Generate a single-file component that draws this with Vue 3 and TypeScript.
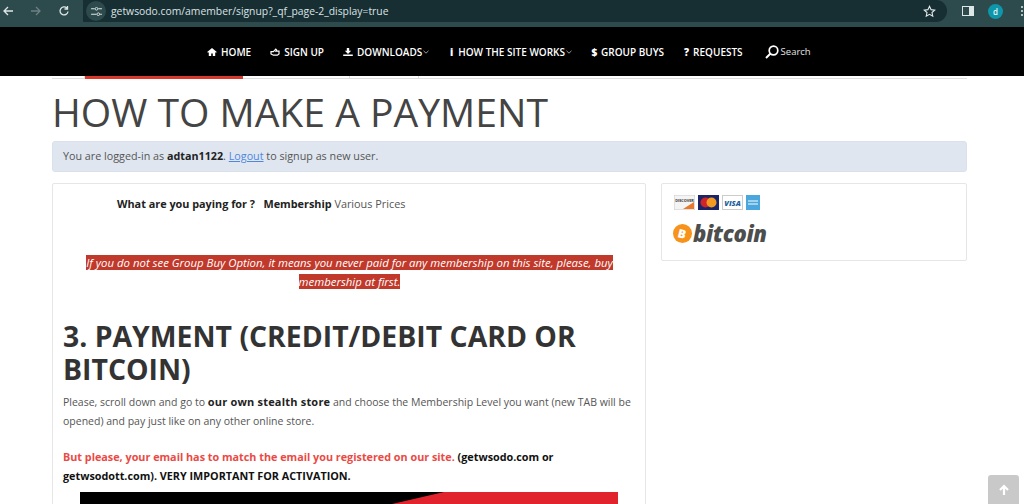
<script setup lang="ts">
const navItems = [
  { icon: "home", label: "HOME", caret: false },
  { icon: "hand", label: "SIGN UP", caret: false },
  { icon: "download", label: "DOWNLOADS", caret: true },
  { icon: "i", label: "HOW THE SITE WORKS", caret: true },
  { icon: "$", label: "GROUP BUYS", caret: false },
  { icon: "?", label: "REQUESTS", caret: false },
];

const tabWidths = [33, 158, 107, 69];
</script>

<template>
  <div class="page">
    <div class="chrome">
      <svg class="cicon" viewBox="0 0 12 12"><path d="M11 6H2M6 2 2 6l4 4" fill="none" stroke="#dfe6e6" stroke-width="1.3" /></svg>
      <svg class="cicon fwd" viewBox="0 0 12 12"><path d="M1 6h9M6 2l4 4-4 4" fill="none" stroke="#6d8082" stroke-width="1.3" /></svg>
      <svg class="cicon reload" viewBox="0 0 12 12"><path d="M10 6.5A4 4 0 1 1 8.8 3M9.5 1v3h-3" fill="none" stroke="#dfe6e6" stroke-width="1.3" /></svg>
      <div class="url">
        <span class="tune">
          <svg viewBox="0 0 12 10" width="11" height="9"><path d="M0 2h4M8 2h4M0 8h6M10 8h2" stroke="#dfe6e6" stroke-width="1.2" /><circle cx="6" cy="2" r="1.5" fill="none" stroke="#dfe6e6" /><circle cx="8" cy="8" r="1.5" fill="none" stroke="#dfe6e6" /></svg>
        </span>
        <span class="addr">getwsodo.com/amember/signup?_qf_page-2_display=true</span>
        <svg class="star" viewBox="0 0 14 14"><path d="M7 1.4 8.7 5l3.9.5-2.9 2.6.8 3.9L7 10.1 3.5 12l.8-3.9L1.4 5.5 5.3 5z" fill="none" stroke="#e3e9e9" stroke-width="1.2" /></svg>
      </div>
      <span class="panel"></span>
      <span class="avatar">d</span>
      <span class="dots"><i></i><i></i><i></i></span>
    </div>

    <nav class="nav">
      <a v-for="item in navItems" :key="item.label" class="nav-item">
        <svg v-if="item.icon === 'home'" class="nav-svg" viewBox="0 0 12 10"><path d="M6 0 0 5l1 1 1-.8V10h3V7h2v3h3V5.200l1 .8 1-1z" fill="#fff" /></svg>
        <svg v-else-if="item.icon === 'hand'" class="nav-svg" viewBox="0 0 12 10"><path d="M1 4.500h3L7 1.500l1 1-1 1.500h4v3.500L9 9H4L1 7.500z" fill="none" stroke="#fff" stroke-width="1.500" /></svg>
        <svg v-else-if="item.icon === 'download'" class="nav-svg" viewBox="0 0 12 10"><path d="M4.500 0h3v3.500H10L6 7.500 2 3.500h2.500zM0 8h12v2H0z" fill="#fff" /></svg>
        <span v-else class="nav-glyph">{{ item.icon }}</span>
        <span>{{ item.label }}</span>
        <svg v-if="item.caret" class="caret" viewBox="0 0 6 4"><path d="M.5.800 3 3.200 5.500.800" fill="none" stroke="#ddd" stroke-width=".7" /></svg>
      </a>
      <a class="search">
        <svg viewBox="0 0 14 14" width="14" height="14"><circle cx="8.500" cy="5.500" r="4.300" fill="none" stroke="#fff" stroke-width="1.700" /><path d="M5.500 8.500 1 13" stroke="#fff" stroke-width="1.900" /></svg>
        <span>Search</span>
      </a>
    </nav>

    <main class="main">
      <div class="tabs">
        <span
          v-for="(w, i) in tabWidths"
          :key="i"
          class="tab"
          :class="{ active: i === 1 }"
          :style="{ width: `${w}px` }"
        ></span>
      </div>
      <h1 class="title">HOW TO MAKE A PAYMENT</h1>
      <div class="alert">
        You are logged-in as <strong>adtan1122</strong>. <a class="link">Logout</a> to signup as new user.
      </div>

      <div class="columns">
        <section class="card content">
          <p class="paying"><strong>What are you paying for ? &nbsp;&nbsp;Membership</strong> Various Prices</p>
          <p class="notice"><span>If you do not see Group Buy Option, it means you never paid for any membership on this site, please, buy membership at first.</span></p>
          <h2 class="heading">3. PAYMENT (CREDIT/DEBIT CARD OR BITCOIN)</h2>
          <p class="body intro">Please, scroll down and go to <strong>our own stealth store</strong> and choose the Membership Level you want (new TAB will be opened) and pay just like on any other online store.</p>
          <p class="body warn">
            <strong class="red">But please, your email has to match the email you registered on our site.</strong>
            <strong class="black"> (getwsodo.com or getwsodott.com). VERY IMPORTANT FOR ACTIVATION.</strong>
          </p>
          <div class="banner">
            <svg viewBox="0 0 538 12" preserveAspectRatio="none" width="538" height="12"><path d="M0 0h364L312 12H0z" fill="#000" /></svg>
          </div>
        </section>

        <aside class="card side">
          <div class="pay-cards">
            <svg width="21" height="15" viewBox="0 0 21 15"><rect width="21" height="15" fill="#f4f4f4" stroke="#ccc" /><path d="M9 14 20 7v7z" fill="#e8792c" /><text x="10.500" y="7" text-anchor="middle" font-size="3.800" font-weight="700" fill="#333" font-family="Open Sans">DISCOVER</text></svg>
            <svg width="21" height="15" viewBox="0 0 21 15"><rect width="21" height="15" fill="#1a2466" /><circle cx="7.500" cy="7.500" r="5" fill="#d0242b" /><circle cx="13.500" cy="7.500" r="5" fill="#f29a21" /></svg>
            <svg width="21" height="15" viewBox="0 0 21 15"><rect x=".5" y=".5" width="20" height="14" fill="#fff" stroke="#ccc" /><text x="10.500" y="10.500" text-anchor="middle" font-size="7.500" font-weight="800" font-style="italic" fill="#1d5f9e" font-family="Open Sans">VISA</text></svg>
            <svg width="14" height="15" viewBox="0 0 14 15"><rect width="14" height="15" fill="#4aa6dc" /><path d="M2 6h10M2 9h10" stroke="#bfe2f5" stroke-width="1.500" /></svg>
          </div>
          <div class="btc">
            <span class="btc-coin"><span>B</span></span>
            <span class="btc-word">bitcoin</span>
          </div>
        </aside>
      </div>
    </main>

    <div class="to-top">
      <svg viewBox="0 0 12 12" width="12" height="12"><path d="M6 11V2M2 6l4-4 4 4" fill="none" stroke="#fff" stroke-width="2.200" /></svg>
    </div>
  </div>
</template>

<style scoped>
.page {
  position: relative;
  width: 1024px;
  height: 504px;
  overflow: hidden;
  background: #fff;
  font-family: "Open Sans", "Liberation Sans", sans-serif;
  color: #444;
}

.chrome {
  height: 27px;
  box-sizing: border-box;
  padding: 0 0 5px 2px;
  background: #2d4a4d;
  display: flex;
  align-items: center;
}
.cicon {
  width: 12px;
  height: 12px;
  margin-right: 16px;
  flex: none;
}
.reload {
  margin-right: 13px;
}
.url {
  width: 864px;
  height: 22px;
  background: #172e33;
  border-radius: 0 11px 11px 0;
  display: flex;
  align-items: center;
  flex: none;
}
.tune {
  width: 20px;
  height: 20px;
  margin-left: 3px;
  border-radius: 50%;
  background: #2d4a4d;
  display: flex;
  align-items: center;
  justify-content: center;
}
.addr {
  margin-left: 5px;
  font-size: 10.350px;
  color: #dbe3e3;
  flex: 1;
}
.star {
  width: 13px;
  height: 13px;
  margin-right: 11px;
}
.panel {
  width: 12px;
  height: 10px;
  margin-left: 15px;
  box-sizing: border-box;
  border: 1px solid #dfe6e6;
  border-right-width: 5px;
  flex: none;
}
.avatar {
  width: 15px;
  height: 15px;
  margin-left: 14px;
  border-radius: 50%;
  background: #0e97ab;
  color: #e8f5f7;
  font-size: 8px;
  font-weight: 600;
  display: flex;
  align-items: center;
  justify-content: center;
  flex: none;
}
.dots {
  margin-left: 18px;
  display: flex;
  flex-direction: column;
  gap: 2px;
}
.dots i {
  width: 2px;
  height: 2px;
  background: #dfe6e6;
  border-radius: 50%;
}

.nav {
  height: 49px;
  background: #000;
  color: #fff;
  display: flex;
  align-items: center;
  padding-left: 207px;
  gap: 19px;
  font-size: 10px;
  font-weight: 600;
}
.nav-item {
  display: flex;
  align-items: center;
  gap: 3px;
  white-space: nowrap;
}
.nav-svg {
  width: 10px;
  height: 8px;
  margin-right: 1px;
}
.nav-glyph {
  font-weight: 800;
  width: 7px;
  text-align: center;
}
.caret {
  width: 6px;
  height: 4px;
  margin-left: -2px;
}
.search {
  display: flex;
  align-items: center;
  gap: 2px;
  margin-left: 3px;
  font-weight: 400;
  font-size: 9.500px;
  color: #e4e4e4;
}

.main {
  padding: 0 57px 0 52px;
}
.tabs {
  height: 2px;
  border-bottom: 1px solid #ddd;
  display: flex;
}
.tab {
  display: block;
  height: 2px;
  box-sizing: border-box;
  border-right: 1px solid #ddd;
}
.tab.active {
  height: 3px;
  background: #d9392b;
  border-right: 0;
}
.title {
  margin: 7px 0 0;
  height: 55px;
  font-size: 39.100px;
  line-height: 52px;
  font-weight: 400;
  color: #444;
  white-space: nowrap;
}
.alert {
  height: 31px;
  box-sizing: border-box;
  background: #dfe6ef;
  border: 1px solid #d9e1ea;
  border-radius: 3px;
  padding-left: 10px;
  font-size: 10.750px;
  line-height: 29px;
  color: #555;
}
.alert strong {
  color: #222;
}
.link {
  color: #4f86e0;
  text-decoration: underline;
}

.columns {
  display: flex;
  align-items: flex-start;
  gap: 15px;
  margin-top: 11px;
}
.card {
  background: #fff;
  border: 1px solid #e6e6e6;
  border-radius: 2px;
  box-sizing: border-box;
}
.content {
  width: 594px;
  height: 340px;
  padding: 0 9px 0 10px;
  overflow: hidden;
  flex: none;
}
.paying {
  margin: 13px 0 0 54px;
  font-size: 10.850px;
  line-height: 14px;
  color: #555;
}
.paying strong {
  color: #222;
}
.notice {
  margin: 42px 0 0;
  text-align: center;
  font-size: 11.400px;
  font-style: italic;
  line-height: 19px;
  color: #fff;
}
.notice span {
  background: #c0392b;
}
.heading {
  margin: 29px 0 0;
  font-size: 28.400px;
  line-height: 33px;
  font-weight: 700;
  color: #333;
}
.body {
  margin: 6px 0 0;
  font-size: 10.800px;
  line-height: 19px;
  color: #555;
}
.intro {
  font-size: 10.500px;
}
.intro strong {
  font-size: 11px;
  letter-spacing: 0.2px;
}
.body strong {
  color: #222;
}
.warn {
  margin-top: 16px;
}
.body .red {
  color: #ea4a45;
}
.body .black {
  color: #111;
}
.banner {
  margin: 7px 0 0 17px;
  width: 538px;
  height: 12px;
  background: #e1232e;
  line-height: 0;
}

.side {
  width: 306px;
  height: 78px;
  padding: 11px 12px 11px 11px;
  flex: none;
}
.pay-cards {
  display: flex;
  gap: 3px;
  height: 15px;
  margin-left: 1px;
}
.btc {
  display: flex;
  align-items: center;
  margin-top: 11px;
}
.btc-coin {
  width: 19px;
  height: 19px;
  border-radius: 50%;
  background: #f7931a;
  color: #fff;
  font-size: 12px;
  font-weight: 800;
  line-height: 19px;
  text-align: center;
  flex: none;
}
.btc-coin span {
  display: inline-block;
  transform: rotate(14deg);
}
.btc-word {
  margin-left: 1px;
  font-size: 22px;
  line-height: 24px;
  font-weight: 800;
  font-style: italic;
  color: #4d4d4d;
  letter-spacing: -0.3px;
}

.to-top {
  position: absolute;
  left: 988px;
  top: 475px;
  width: 31px;
  height: 29px;
  border-radius: 3px 3px 0 0;
  background: #c9c9c9;
  display: flex;
  align-items: center;
  justify-content: center;
}
</style>
